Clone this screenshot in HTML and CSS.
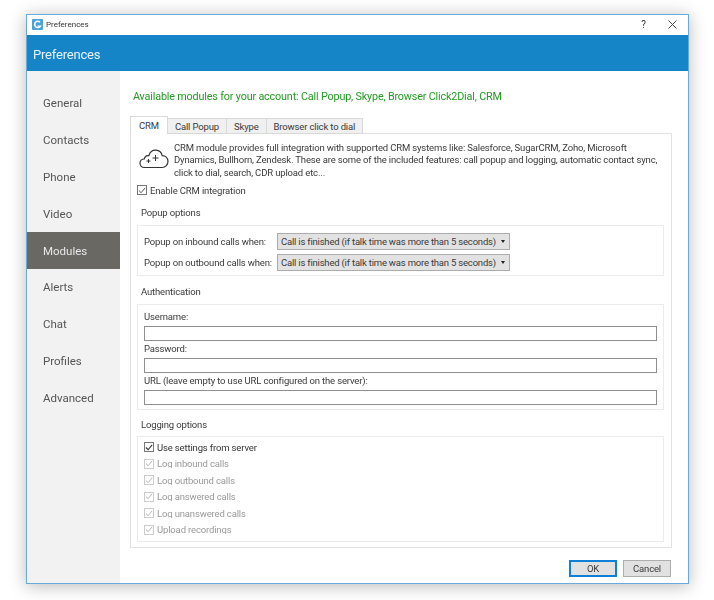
FILE: index.html
```html
<!DOCTYPE html>
<html lang="en">
<head>
<meta charset="utf-8">
<title>Preferences</title>
<link rel="stylesheet" href="styles.css">
</head>
<body>
<div class="window">
  <div class="titlebar">
    <svg class="app-icon" width="11" height="11" viewBox="0 0 11 11"><rect width="11" height="11" rx="1" fill="#4aa3dc"/><path d="M8 3.200A3.100 3.100 0 1 0 8.300 7.200H5.600" fill="none" stroke="#fff" stroke-width="1.600"/></svg>
    <span class="title-text">Preferences</span>
    <span class="help">?</span>
    <svg class="close" width="9" height="9" viewBox="0 0 9 9"><path d="M.5.5l8 8M8.500.5l-8 8" stroke="#444" stroke-width="1" fill="none"/></svg>
  </div>
  <div class="banner">Preferences</div>
  <div class="main">
    <nav class="sidebar">
      <div class="nav-item">General</div>
      <div class="nav-item">Contacts</div>
      <div class="nav-item">Phone</div>
      <div class="nav-item">Video</div>
      <div class="nav-item active">Modules</div>
      <div class="nav-item">Alerts</div>
      <div class="nav-item">Chat</div>
      <div class="nav-item">Profiles</div>
      <div class="nav-item">Advanced</div>
    </nav>
    <div class="content">
      <div class="available">Available modules for your account: Call Popup, Skype, Browser Click2Dial, CRM</div>
      <div class="tabs">
        <div class="tab selected">CRM</div>
        <div class="tab">Call Popup</div>
        <div class="tab">Skype</div>
        <div class="tab">Browser click to dial</div>
      </div>
      <div class="panel">
        <div class="intro">
          <svg class="cloud" width="30" height="20" viewBox="0 0 30 20"><path d="M7 18.500H5.500C2.800 18.500 1 16.500 1 14.200 1 12 2.800 10 5.200 10 5.800 7.500 7.600 6.300 9.800 6.600 11 3 14 1 17 1.200c3.200.2 5.600 2.400 6.200 5.400 3-.2 5.800 2.300 5.800 5.600 0 3.400-2.500 6.300-5.800 6.300H7z" fill="none" stroke="#333" stroke-width="1.200"/><path d="M7.500 12h4M9.500 10v4M13.500 9h6M16.500 6v6" stroke="#333" stroke-width="1" fill="none"/></svg>
          <p class="intro-text">CRM module provides full integration with supported CRM systems like: Salesforce, SugarCRM, Zoho, Microsoft<br>Dynamics, Bullhorn, Zendesk. These are some of the included features: call popup and logging, automatic contact sync,<br>click to dial, search, CDR upload etc...</p>
        </div>
        <label class="check enable"><span class="box"><svg width="9" height="9" viewBox="0 0 9 9"><path d="M1 4.500l2.500 2.500L8 1.500" fill="none" stroke="#444" stroke-width="1"/></svg></span>Enable CRM integration</label>
        <div class="section-title first">Popup options</div>
        <div class="group popup">
          <div class="popup-row"><span class="popup-label">Popup on inbound calls when:</span><span class="select">Call is finished (if talk time was more than 5 seconds)<i class="caret"></i></span></div>
          <div class="popup-row"><span class="popup-label">Popup on outbound calls when:</span><span class="select">Call is finished (if talk time was more than 5 seconds)<i class="caret"></i></span></div>
        </div>
        <div class="section-title auth-title">Authentication</div>
        <div class="group auth">
          <div class="field-label">Username:</div>
          <div class="input"></div>
          <div class="field-label">Password:</div>
          <div class="input"></div>
          <div class="field-label">URL (leave empty to use URL configured on the server):</div>
          <div class="input"></div>
        </div>
        <div class="section-title log-title">Logging options</div>
        <div class="group logging">
          <label class="check log strong"><span class="box"><svg width="9" height="9" viewBox="0 0 9 9"><path d="M1 4.500l2.500 2.500L8 1.500" fill="none" stroke="#333" stroke-width="1.200"/></svg></span><span>Use settings from server</span></label>
          <label class="check log off"><span class="box"><svg width="9" height="9" viewBox="0 0 9 9"><path d="M1 4.500l2.500 2.500L8 1.500" fill="none" stroke="#aaa" stroke-width="1"/></svg></span><span class="log-text">Log inbound calls</span></label>
          <label class="check log off"><span class="box"><svg width="9" height="9" viewBox="0 0 9 9"><path d="M1 4.500l2.500 2.500L8 1.500" fill="none" stroke="#aaa" stroke-width="1"/></svg></span><span class="log-text">Log outbound calls</span></label>
          <label class="check log off"><span class="box"><svg width="9" height="9" viewBox="0 0 9 9"><path d="M1 4.500l2.500 2.500L8 1.500" fill="none" stroke="#aaa" stroke-width="1"/></svg></span><span class="log-text">Log answered calls</span></label>
          <label class="check log off"><span class="box"><svg width="9" height="9" viewBox="0 0 9 9"><path d="M1 4.500l2.500 2.500L8 1.500" fill="none" stroke="#aaa" stroke-width="1"/></svg></span><span class="log-text">Log unanswered calls</span></label>
          <label class="check log off"><span class="box"><svg width="9" height="9" viewBox="0 0 9 9"><path d="M1 4.500l2.500 2.500L8 1.500" fill="none" stroke="#aaa" stroke-width="1"/></svg></span><span class="log-text">Upload recordings</span></label>
        </div>
      </div>
      <div class="actions">
        <div class="btn default">OK</div>
        <div class="btn">Cancel</div>
      </div>
    </div>
  </div>
</div>
</body>
</html>
```
FILE: styles.css
```css
* { box-sizing: border-box; }
html, body { margin: 0; height: 100%; background: #fff; overflow: hidden; }
body {
  padding: 14px 0 0 26px;
  font-family: Roboto, "Open Sans", sans-serif;
  font-size: 9.500px;
  letter-spacing: -0.15px;
  color: #3a3a3a;
}
.window {
  width: 663px;
  height: 570px;
  border: 1px solid #6aa9dc;
  background: #fff;
  box-shadow: 0 2px 16px rgba(0,0,0,.28);
  display: flex;
  flex-direction: column;
  filter: blur(.3px);
}
.titlebar {
  height: 20px;
  flex: none;
  display: flex;
  align-items: center;
  padding: 0 0 2px 5px;
  font-size: 8px;
  letter-spacing: 0;
  color: #333;
}
.app-icon { margin-right: 3px; }
.title-text { flex: 1; }
.help { margin-right: 22px; font-size: 10px; }
.close { margin-right: 11px; }
.banner {
  height: 36px;
  flex: none;
  background: #1585c8;
  color: #e6f2fa;
  font-size: 13px;
  letter-spacing: -0.2px;
  padding: 2px 0 0 6px;
  display: flex;
  align-items: center;
}
.main { flex: 1; display: flex; min-height: 0; }
.sidebar {
  width: 93px;
  flex: none;
  background: #f2f2f2;
  padding-top: 14px;
}
.nav-item {
  height: 36.800px;
  padding-left: 16px;
  display: flex;
  align-items: center;
  font-size: 11.500px;
  letter-spacing: 0;
  color: #555;
}
.nav-item.active { background: #6a6862; color: #e8e8e8; }
.content { width: 568px; min-width: 0; padding: 0 16px 0 10px; display: flex; flex-direction: column; }
.available {
  color: #249a24;
  font-size: 10.800px;
  letter-spacing: -0.17px;
  line-height: 16px;
  margin: 18px 0 0 3px;
}
.tabs { display: flex; margin-top: 11px; height: 18px; align-items: flex-end; position: relative; z-index: 1; }
.tab {
  height: 16px;
  padding: 0 7px;
  background: #f0f0f0;
  border: 1px solid #d9d9d9;
  border-left: 0;
  display: flex;
  align-items: center;
}
.tab.selected {
  height: 18px;
  background: #fff;
  border-left: 1px solid #d9d9d9;
  border-bottom: 0;
  padding: 0 8px;
}
.panel {
  height: 415px;
  margin-top: -1px;
  border: 1px solid #e2e2e2;
  padding: 0 7px 0 6px;
}
.intro { display: flex; align-items: center; height: 46px; padding-top: 7px; }
.cloud { flex: none; margin: -4px 5px 0 2px; }
.intro-text { margin: 0; line-height: 12.600px; white-space: nowrap; }
.check { display: flex; align-items: center; }
.box {
  width: 10px; height: 10px;
  border: 1px solid #777;
  display: flex; align-items: center; justify-content: center;
  margin-right: 3px;
  flex: none;
}
.enable { height: 16px; margin-top: 2px; }
.section-title { margin-left: 4px; line-height: 14px; }
.first { margin-top: 8px; }
.auth-title { margin-top: 9px; }
.log-title { margin-top: 8px; }
.group { border: 1px solid #ececec; padding: 0 6px; margin-top: 5px; }
.popup { height: 51px; padding-top: 7px; }
.popup-row { display: flex; align-items: center; height: 17px; margin-bottom: 4px; }
.popup-label { width: 133px; flex: none; white-space: nowrap; }
.select {
  width: 233px; height: 17px;
  background: #e2e2e2;
  border: 1px solid #adadad;
  padding-left: 3px;
  display: flex; align-items: center;
  position: relative;
  white-space: nowrap;
  letter-spacing: -0.2px;
}
.caret {
  position: absolute; right: 4px; top: 6px;
  width: 0; height: 0;
  border: 2.500px solid transparent;
  border-top: 3px solid #222;
  border-bottom: 0;
}
.auth { height: 106px; padding-top: 4px; }
.field-label { line-height: 15px; height: 17px; }
.input { height: 15px; border: 1px solid #8f8f8f; }
.logging { height: 106px; margin-top: 4px; padding-top: 3px; overflow: hidden; }
.log { height: 14px; margin-bottom: 2.600px; white-space: nowrap; }
.log.strong { color: #333; }
.log.off { color: #9a9a9a; }
.log.off .box { border-color: #ccc; }
.log-text { height: 9px; line-height: 10px; overflow: hidden; }
.actions { display: flex; justify-content: flex-end; gap: 6px; margin-top: 12px; padding-right: 1px; }
.btn {
  width: 48px; height: 17px;
  background: #e1e1e1;
  border: 1px solid #adadad;
  display: flex; align-items: center; justify-content: center;
}
.btn.default { border: 1px solid #0f80d8; box-shadow: inset 0 0 0 1px #0f80d8; }
```
